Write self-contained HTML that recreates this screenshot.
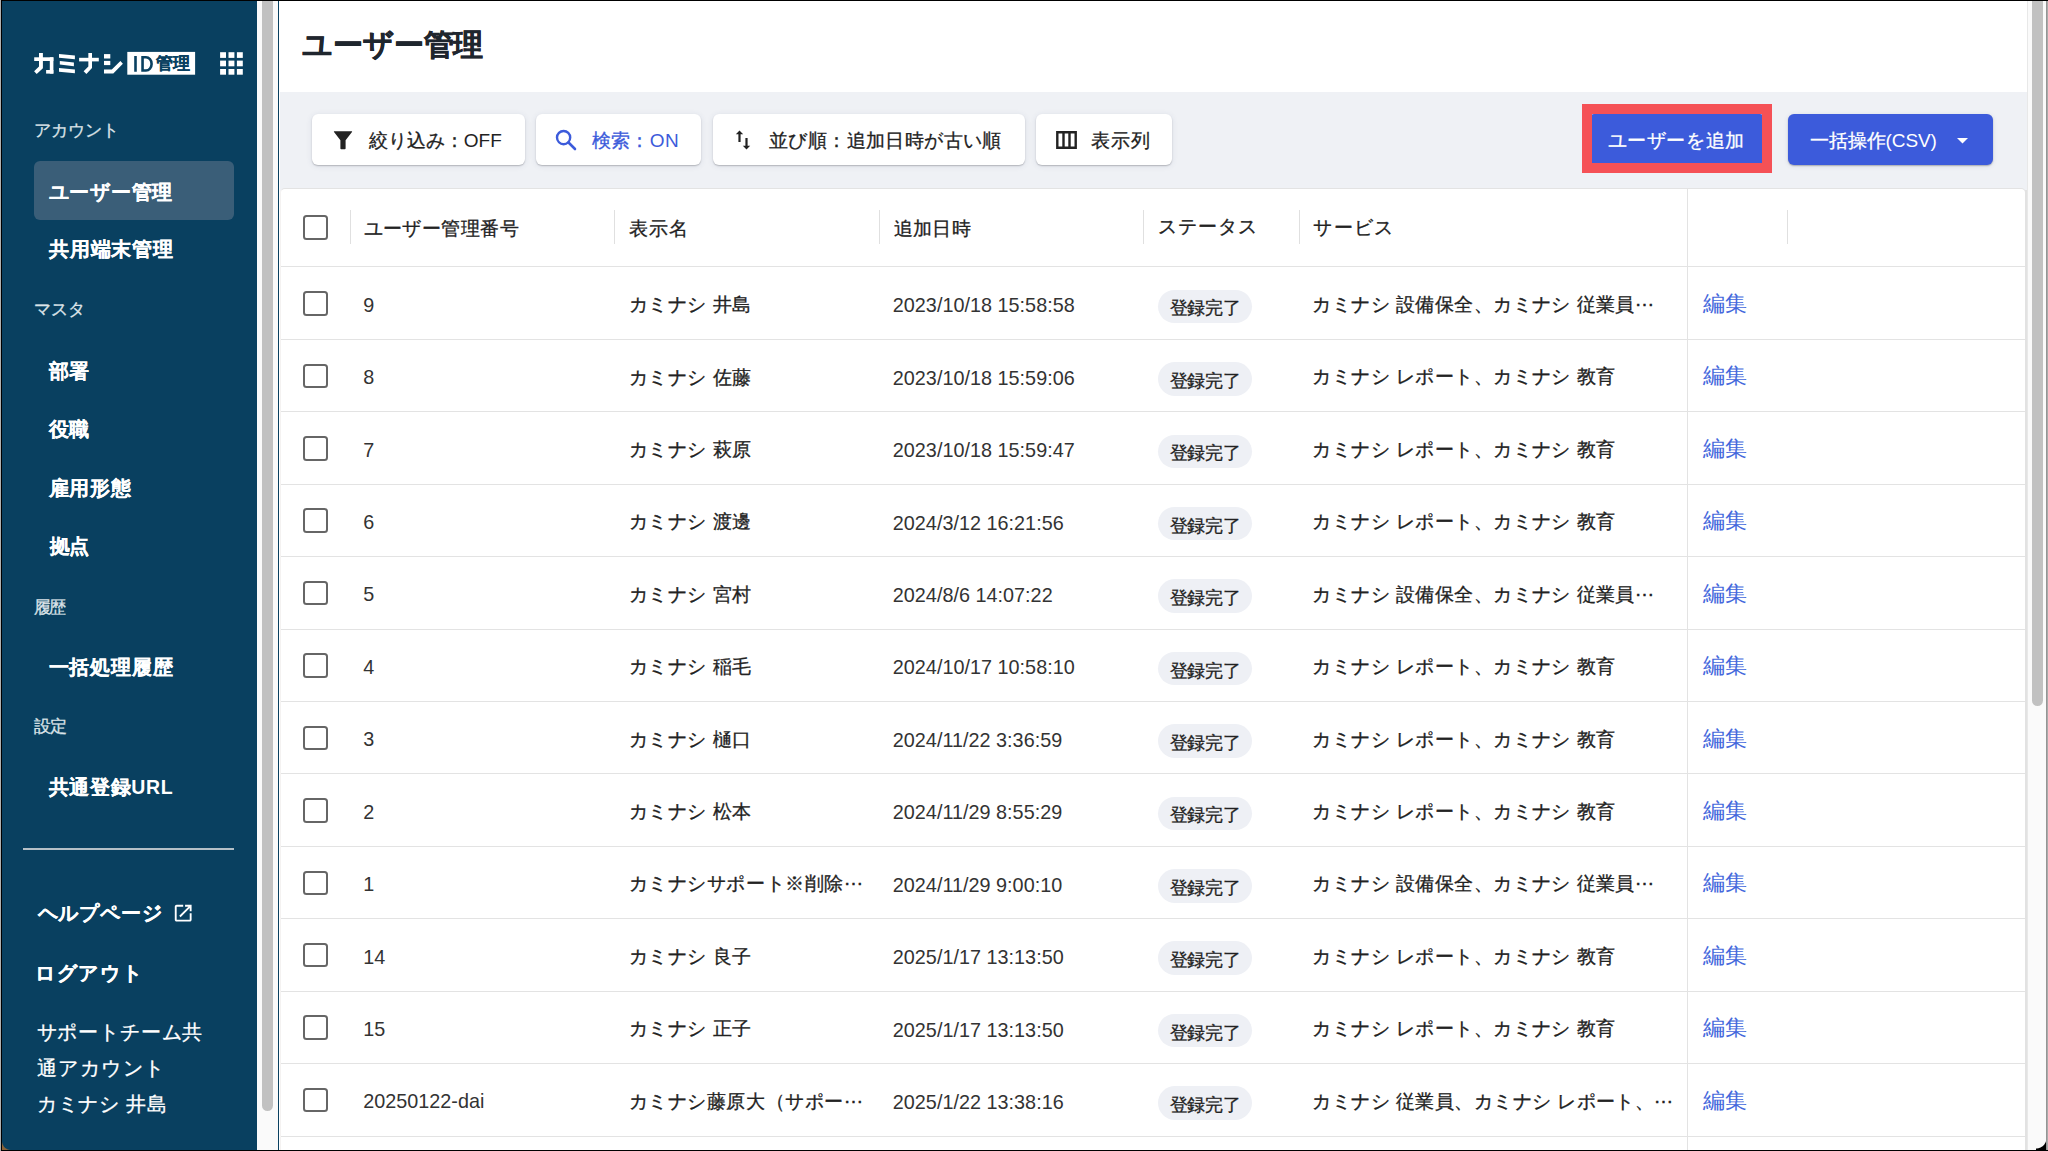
<!DOCTYPE html>
<html><head><meta charset="utf-8"><title>ユーザー管理</title><style>
*{box-sizing:border-box}
html,body{margin:0;padding:0;width:2048px;height:1151px;overflow:hidden;background:#fff}
body{position:relative;font-family:"Liberation Sans",sans-serif}
.a{position:absolute}
.t{position:absolute;white-space:nowrap;line-height:1;font-family:"Liberation Sans",sans-serif}
</style></head><body>
<div class="a" style="left:0px;top:0px;width:258px;height:1151px;background:#094060"></div>
<div class="a" style="left:257px;top:0px;width:21px;height:1151px;background:#fafafa"></div>
<div class="a" style="left:262px;top:0px;width:11px;height:1111px;background:#c1c1c1;border-radius:0 0 6px 6px"></div>
<div class="a" style="left:277.5px;top:0px;width:1.5px;height:1151px;background:#094060"></div>
<div class="a" style="left:279px;top:0px;width:1748px;height:1151px;background:#fff"></div>
<div class="a" style="left:280px;top:92px;width:1747px;height:1059px;background:#eff1f5"></div>
<div class="a" style="left:2027px;top:0px;width:19px;height:1151px;background:#fafafa;border-left:1px solid #e8e8e8"></div>
<div class="a" style="left:2032px;top:0px;width:11px;height:706px;background:#c1c1c1;border-radius:0 0 6px 6px"></div>
<div class="a" style="left:2046px;top:0px;width:2px;height:1151px;background:linear-gradient(90deg,#8a8a8a,#b5b5b5)"></div>
<svg class="a" style="left:0;top:0" width="258" height="90" viewBox="0 0 258 90"><g fill="#fff"><rect x="34.2" y="57.3" width="19.2" height="3.7"/><polygon points="39,53.1 42.9,53.1 42.9,68.2 36.7,74.0 34.1,71.3 39,66.6"/><rect x="49.8" y="57.3" width="3.6" height="16.3"/><rect x="46.1" y="70" width="7.3" height="3.6"/><polygon points="59,54.1 74.9,55.6 74.9,59.2 59,57.7"/><polygon points="59.8,60.9 73.9,62.5 73.9,66.2 59.8,64.6"/><polygon points="59,68.0 74.9,69.6 74.9,73.3 59,71.7"/><rect x="79.1" y="57.8" width="19.7" height="3.6"/><polygon points="88.35,53.1 92.0,53.1 92.0,68.0 86.4,73.9 83.6,71.2 88.35,66.5"/><rect x="104" y="54.1" width="6.3" height="4.4"/><rect x="104" y="60.9" width="6.3" height="4.2"/><polygon points="104,69.6 111.8,69.6 120.4,61.1 122.9,63.7 113.3,73.6 104,73.6"/><rect x="127.3" y="51.9" width="67.8" height="22.8"/></g><g fill="#094060"><rect x="134.2" y="56" width="2.6" height="15.75"/><path fill-rule="evenodd" d="M141.25 56H146A6.9 7.875 0 0 1 146 71.75H141.25ZM143.85 58.5V69.25H146A4.3 5.375 0 0 0 146 58.5Z"/></g><g fill="#fff"><rect x="220.1" y="52.2" width="5.9" height="5.7"/><rect x="228.5" y="52.2" width="5.9" height="5.7"/><rect x="236.9" y="52.2" width="5.9" height="5.7"/><rect x="220.1" y="60.6" width="5.9" height="5.7"/><rect x="228.5" y="60.6" width="5.9" height="5.7"/><rect x="236.9" y="60.6" width="5.9" height="5.7"/><rect x="220.1" y="69.0" width="5.9" height="5.7"/><rect x="228.5" y="69.0" width="5.9" height="5.7"/><rect x="236.9" y="69.0" width="5.9" height="5.7"/></g></svg>
<div class="t" style="left:155.9px;top:55.05px;font-size:16.5px;color:#094060;font-weight:bold;-webkit-text-stroke:0.2px currentColor;">管理</div>
<div class="t" style="left:34.1px;top:122.45px;font-size:16.5px;letter-spacing:-0.1px;color:#dde4e9;-webkit-text-stroke:0.3px currentColor;">アカウント</div>
<div class="t" style="left:34.1px;top:300.7px;font-size:16.5px;letter-spacing:0.2px;color:#dde4e9;-webkit-text-stroke:0.3px currentColor;">マスタ</div>
<div class="t" style="left:34.1px;top:598.75px;font-size:16.5px;letter-spacing:-1.8px;color:#dde4e9;-webkit-text-stroke:0.3px currentColor;">履歴</div>
<div class="t" style="left:34px;top:718.25px;font-size:16.5px;letter-spacing:-1.0px;color:#dde4e9;-webkit-text-stroke:0.3px currentColor;">設定</div>
<div class="a" style="left:34px;top:161px;width:200px;height:58.5px;background:#3a5e78;border-radius:6px"></div>
<div class="t" style="left:48.7px;top:182.75px;font-size:19.5px;letter-spacing:0.72px;color:#fff;font-weight:bold;-webkit-text-stroke:0.15px currentColor;">ユーザー管理</div>
<div class="t" style="left:48.7px;top:240.45px;font-size:19.5px;letter-spacing:0.92px;color:#fff;font-weight:bold;-webkit-text-stroke:0.15px currentColor;">共用端末管理</div>
<div class="t" style="left:48.7px;top:362.15px;font-size:19.5px;letter-spacing:0.2px;color:#fff;font-weight:bold;-webkit-text-stroke:0.15px currentColor;">部署</div>
<div class="t" style="left:49px;top:420.0px;font-size:19.5px;color:#fff;font-weight:bold;-webkit-text-stroke:0.15px currentColor;">役職</div>
<div class="t" style="left:48.7px;top:479.15px;font-size:19.5px;letter-spacing:0.667px;color:#fff;font-weight:bold;-webkit-text-stroke:0.15px currentColor;">雇用形態</div>
<div class="t" style="left:49.7px;top:537.15px;font-size:19.5px;letter-spacing:-0.8px;color:#fff;font-weight:bold;-webkit-text-stroke:0.15px currentColor;">拠点</div>
<div class="t" style="left:48.7px;top:657.9px;font-size:19.5px;letter-spacing:0.8px;color:#fff;font-weight:bold;-webkit-text-stroke:0.15px currentColor;">一括処理履歴</div>
<div class="t" style="left:48.7px;top:777.8px;font-size:19.5px;letter-spacing:0.667px;color:#fff;font-weight:bold;-webkit-text-stroke:0.15px currentColor;">共通登録<span style="-webkit-text-stroke:0">URL</span></div>
<div class="t" style="left:37.6px;top:904.4px;font-size:19.5px;letter-spacing:0.88px;color:#fff;font-weight:bold;-webkit-text-stroke:0.15px currentColor;">ヘルプページ</div>
<div class="t" style="left:34.6px;top:963.75px;font-size:19.5px;letter-spacing:1.95px;color:#fff;font-weight:bold;-webkit-text-stroke:0.15px currentColor;">ログアウト</div>
<div class="a" style="left:23px;top:848px;width:211px;height:2px;background:#b5c0c7"></div>
<svg class="a" style="left:172.2px;top:901.6px" width="22" height="22" viewBox="0 0 23.58 23.58"><path fill="#fff" d="M19 19H5V5h7V3H5c-1.11 0-2 .9-2 2v14c0 1.1.89 2 2 2h14c1.1 0 2-.9 2-2v-7h-2v7zM14 3v2h3.59l-9.83 9.83 1.41 1.41L19 6.41V10h2V3h-7z"/></svg>
<div class="t" style="left:36.6px;top:1022.85px;font-size:19.5px;letter-spacing:0.829px;color:#fff;-webkit-text-stroke:0.3px currentColor;">サポートチーム共</div>
<div class="t" style="left:36.9px;top:1059.0px;font-size:19.5px;letter-spacing:1.48px;color:#fff;-webkit-text-stroke:0.3px currentColor;">通アカウント</div>
<div class="t" style="left:36.7px;top:1095.4px;font-size:19.5px;letter-spacing:0.867px;color:#fff;-webkit-text-stroke:0.3px currentColor;">カミナシ 井島</div>
<div class="t" style="left:302.3px;top:29.55px;font-size:29.5px;letter-spacing:-0.16px;color:#1f262e;font-weight:bold;-webkit-text-stroke:0.5px currentColor;">ユーザー管理</div>
<div class="a" style="left:312px;top:114.1px;width:213px;height:51.2px;background:#fff;border-radius:6px;box-shadow:0 1px 1.5px rgba(0,0,0,0.22),0 1px 6px rgba(50,70,120,0.10)"></div>
<div class="a" style="left:536px;top:114.1px;width:165px;height:51.2px;background:#fff;border-radius:6px;box-shadow:0 1px 1.5px rgba(0,0,0,0.22),0 1px 6px rgba(50,70,120,0.10)"></div>
<div class="a" style="left:713px;top:114.1px;width:312px;height:51.2px;background:#fff;border-radius:6px;box-shadow:0 1px 1.5px rgba(0,0,0,0.22),0 1px 6px rgba(50,70,120,0.10)"></div>
<div class="a" style="left:1036px;top:114.1px;width:136px;height:51.2px;background:#fff;border-radius:6px;box-shadow:0 1px 1.5px rgba(0,0,0,0.22),0 1px 6px rgba(50,70,120,0.10)"></div>
<svg class="a" style="left:333px;top:130px" width="20" height="20" viewBox="0 0 20 20"><path d="M1.2 1.2Q0.6 1.4 1 2.1L7.4 10.2V18.5Q7.4 19.3 8.2 19.3H11.8Q12.6 19.3 12.6 18.5V10.2L19 2.1Q19.4 1.4 18.8 1.2Z" fill="#222"/></svg>
<div class="t" style="left:368.8px;top:130.9px;font-size:19px;color:#222222;-webkit-text-stroke:0.3px currentColor;">絞り込み：<span style="-webkit-text-stroke:0">OFF</span></div>
<svg class="a" style="left:555px;top:129px" width="22" height="22" viewBox="0 0 22 22"><circle cx="8.6" cy="8.6" r="6.6" fill="none" stroke="#3c5bdb" stroke-width="2.4"/><path d="M13.5 13.5 20 20" stroke="#3c5bdb" stroke-width="2.6" stroke-linecap="round"/></svg>
<div class="t" style="left:591.8px;top:131.0px;font-size:19px;letter-spacing:0.35px;color:#3c5bdb;-webkit-text-stroke:0.3px currentColor;">検索：<span style="-webkit-text-stroke:0">ON</span></div>
<svg class="a" style="left:735px;top:129px" width="17" height="22" viewBox="0 0 17 22"><path d="M4.5 1.5 0.8 5.3H3.4V13H5.6V5.3H8.2Z" fill="#222"/><path d="M11.5 20.5 15.2 16.7H12.6V9H10.4V16.7H7.8Z" fill="#222"/></svg>
<div class="t" style="left:769px;top:131.15px;font-size:19px;letter-spacing:0.4px;color:#222222;-webkit-text-stroke:0.3px currentColor;">並び順：追加日時が古い順</div>
<svg class="a" style="left:1056px;top:131px" width="22" height="18" viewBox="0 0 22 18"><path d="M1.3 1.3H19.7V16.7H1.3Z M7.5 1.3V16.7 M13.5 1.3V16.7" fill="none" stroke="#222" stroke-width="2.4"/></svg>
<div class="t" style="left:1091px;top:130.75px;font-size:19px;letter-spacing:0.8px;color:#222222;-webkit-text-stroke:0.3px currentColor;">表示列</div>
<div class="a" style="left:1591px;top:114px;width:172px;height:50px;background:#3c5bdb;border-radius:3px"></div>
<div class="t" style="left:1607.9px;top:130.8px;font-size:19px;letter-spacing:0.533px;color:#fff;-webkit-text-stroke:0.3px currentColor;">ユーザーを追加</div>
<div class="a" style="left:1581.5px;top:103.8px;width:190.5px;height:69.2px;border:10px solid #f55156"></div>
<div class="a" style="left:1788px;top:114px;width:205px;height:51.3px;background:#3c5bdb;border-radius:6px;box-shadow:0 1px 1.5px rgba(0,0,0,0.25),0 1px 5px rgba(50,70,120,0.12)"></div>
<div class="t" style="left:1810px;top:130.9px;font-size:19px;letter-spacing:-0.1px;color:#fff;-webkit-text-stroke:0.3px currentColor;">一括操作<span style="-webkit-text-stroke:0">(CSV)</span></div>
<svg class="a" style="left:1957px;top:138px" width="11" height="6" viewBox="0 0 11 6"><path d="M0 0H11L5.5 5.6Z" fill="#fff"/></svg>
<div class="a" style="left:280px;top:188px;width:1746px;height:980px;background:#fff;border:1px solid #e3e3e3;border-left-color:#f4f2f1;border-radius:5px"></div>
<div class="a" style="left:303px;top:215px;width:24.5px;height:24.5px;border:2.7px solid #666666;border-radius:3.5px"></div>
<div class="a" style="left:349.5px;top:210px;width:1.3px;height:34px;background:#e0e0e0"></div>
<div class="a" style="left:614px;top:210px;width:1.3px;height:34px;background:#e0e0e0"></div>
<div class="a" style="left:879px;top:210px;width:1.3px;height:34px;background:#e0e0e0"></div>
<div class="a" style="left:1143px;top:210px;width:1.3px;height:34px;background:#e0e0e0"></div>
<div class="a" style="left:1299px;top:210px;width:1.3px;height:34px;background:#e0e0e0"></div>
<div class="a" style="left:1787px;top:210px;width:1.3px;height:34px;background:#e0e0e0"></div>
<div class="t" style="left:363.5px;top:219.1px;font-size:19px;letter-spacing:0.429px;color:#222222;-webkit-text-stroke:0.3px currentColor;">ユーザー管理番号</div>
<div class="t" style="left:628.6px;top:219.1px;font-size:19px;letter-spacing:1.3px;color:#222222;-webkit-text-stroke:0.3px currentColor;">表示名</div>
<div class="t" style="left:893.8px;top:219.1px;font-size:19px;letter-spacing:0.267px;color:#222222;-webkit-text-stroke:0.3px currentColor;">追加日時</div>
<div class="t" style="left:1158px;top:217.15px;font-size:19px;letter-spacing:0.9px;color:#222222;-webkit-text-stroke:0.3px currentColor;">ステータス</div>
<div class="t" style="left:1313.4px;top:217.65px;font-size:19px;letter-spacing:1.2px;color:#222222;-webkit-text-stroke:0.3px currentColor;">サービス</div>
<div class="a" style="left:1687px;top:188px;width:1.3px;height:963px;background:#e3e3e3"></div>
<div class="a" style="left:2025px;top:190px;width:2px;height:961px;background:#e2e2e2"></div>
<div class="a" style="left:281px;top:266px;width:1744px;height:1px;background:#e3e3e3"></div>
<div class="a" style="left:281px;top:339.0px;width:1744px;height:1px;background:#e3e3e3"></div>
<div class="a" style="left:303px;top:291.21px;width:24.5px;height:24.5px;border:2.7px solid #666666;border-radius:3.5px"></div>
<div class="t" style="left:363.3px;top:295.75px;font-size:19.8px;color:#333;">9</div>
<div class="t" style="left:628.6px;top:295.1px;font-size:19px;letter-spacing:0.566px;color:#222222;-webkit-text-stroke:0.3px currentColor;">カミナシ 井島</div>
<div class="t" style="left:892.8px;top:296.3px;font-size:19.8px;letter-spacing:0.022px;color:#333;">2023/10/18 15:58:58</div>
<div class="a" style="left:1158px;top:289.71px;width:94px;height:33.5px;background:#eef0f5;border-radius:17px"></div>
<div class="t" style="left:1169.6px;top:300.4px;font-size:17.5px;letter-spacing:-0.133px;color:#222222;-webkit-text-stroke:0.3px currentColor;">登録完了</div>
<div class="t" style="left:1312.4px;top:295.0px;font-size:19px;letter-spacing:0.444px;color:#222222;-webkit-text-stroke:0.3px currentColor;">カミナシ 設備保全、カミナシ 従業員⋯</div>
<div class="t" style="left:1703.1px;top:294.0px;font-size:21.5px;letter-spacing:-0.2px;color:#4468dc;">編集</div>
<div class="a" style="left:281px;top:411.0px;width:1744px;height:1px;background:#e3e3e3"></div>
<div class="a" style="left:303px;top:363.63px;width:24.5px;height:24.5px;border:2.7px solid #666666;border-radius:3.5px"></div>
<div class="t" style="left:363.3px;top:368.17px;font-size:19.8px;color:#333;">8</div>
<div class="t" style="left:628.6px;top:367.52px;font-size:19px;letter-spacing:0.566px;color:#222222;-webkit-text-stroke:0.3px currentColor;">カミナシ 佐藤</div>
<div class="t" style="left:892.8px;top:368.72px;font-size:19.8px;letter-spacing:0.022px;color:#333;">2023/10/18 15:59:06</div>
<div class="a" style="left:1158px;top:362.13px;width:94px;height:33.5px;background:#eef0f5;border-radius:17px"></div>
<div class="t" style="left:1169.6px;top:372.82px;font-size:17.5px;letter-spacing:-0.133px;color:#222222;-webkit-text-stroke:0.3px currentColor;">登録完了</div>
<div class="t" style="left:1312.4px;top:367.42px;font-size:19px;letter-spacing:0.444px;color:#222222;-webkit-text-stroke:0.3px currentColor;">カミナシ レポート、カミナシ 教育</div>
<div class="t" style="left:1703.1px;top:366.42px;font-size:21.5px;letter-spacing:-0.2px;color:#4468dc;">編集</div>
<div class="a" style="left:281px;top:484.0px;width:1744px;height:1px;background:#e3e3e3"></div>
<div class="a" style="left:303px;top:436.05px;width:24.5px;height:24.5px;border:2.7px solid #666666;border-radius:3.5px"></div>
<div class="t" style="left:363.3px;top:440.59px;font-size:19.8px;color:#333;">7</div>
<div class="t" style="left:628.6px;top:439.94px;font-size:19px;letter-spacing:0.566px;color:#222222;-webkit-text-stroke:0.3px currentColor;">カミナシ 萩原</div>
<div class="t" style="left:892.8px;top:441.14px;font-size:19.8px;letter-spacing:0.022px;color:#333;">2023/10/18 15:59:47</div>
<div class="a" style="left:1158px;top:434.55px;width:94px;height:33.5px;background:#eef0f5;border-radius:17px"></div>
<div class="t" style="left:1169.6px;top:445.24px;font-size:17.5px;letter-spacing:-0.133px;color:#222222;-webkit-text-stroke:0.3px currentColor;">登録完了</div>
<div class="t" style="left:1312.4px;top:439.84px;font-size:19px;letter-spacing:0.444px;color:#222222;-webkit-text-stroke:0.3px currentColor;">カミナシ レポート、カミナシ 教育</div>
<div class="t" style="left:1703.1px;top:438.84px;font-size:21.5px;letter-spacing:-0.2px;color:#4468dc;">編集</div>
<div class="a" style="left:281px;top:556.0px;width:1744px;height:1px;background:#e3e3e3"></div>
<div class="a" style="left:303px;top:508.47px;width:24.5px;height:24.5px;border:2.7px solid #666666;border-radius:3.5px"></div>
<div class="t" style="left:363.3px;top:513.01px;font-size:19.8px;color:#333;">6</div>
<div class="t" style="left:628.6px;top:512.36px;font-size:19px;letter-spacing:0.566px;color:#222222;-webkit-text-stroke:0.3px currentColor;">カミナシ 渡邊</div>
<div class="t" style="left:892.8px;top:513.56px;font-size:19.8px;letter-spacing:0.022px;color:#333;">2024/3/12 16:21:56</div>
<div class="a" style="left:1158px;top:506.97px;width:94px;height:33.5px;background:#eef0f5;border-radius:17px"></div>
<div class="t" style="left:1169.6px;top:517.66px;font-size:17.5px;letter-spacing:-0.133px;color:#222222;-webkit-text-stroke:0.3px currentColor;">登録完了</div>
<div class="t" style="left:1312.4px;top:512.26px;font-size:19px;letter-spacing:0.444px;color:#222222;-webkit-text-stroke:0.3px currentColor;">カミナシ レポート、カミナシ 教育</div>
<div class="t" style="left:1703.1px;top:511.26px;font-size:21.5px;letter-spacing:-0.2px;color:#4468dc;">編集</div>
<div class="a" style="left:281px;top:629.0px;width:1744px;height:1px;background:#e3e3e3"></div>
<div class="a" style="left:303px;top:580.8900000000001px;width:24.5px;height:24.5px;border:2.7px solid #666666;border-radius:3.5px"></div>
<div class="t" style="left:363.3px;top:585.43px;font-size:19.8px;color:#333;">5</div>
<div class="t" style="left:628.6px;top:584.78px;font-size:19px;letter-spacing:0.566px;color:#222222;-webkit-text-stroke:0.3px currentColor;">カミナシ 宮村</div>
<div class="t" style="left:892.8px;top:585.98px;font-size:19.8px;letter-spacing:0.022px;color:#333;">2024/8/6 14:07:22</div>
<div class="a" style="left:1158px;top:579.3900000000001px;width:94px;height:33.5px;background:#eef0f5;border-radius:17px"></div>
<div class="t" style="left:1169.6px;top:590.08px;font-size:17.5px;letter-spacing:-0.133px;color:#222222;-webkit-text-stroke:0.3px currentColor;">登録完了</div>
<div class="t" style="left:1312.4px;top:584.68px;font-size:19px;letter-spacing:0.444px;color:#222222;-webkit-text-stroke:0.3px currentColor;">カミナシ 設備保全、カミナシ 従業員⋯</div>
<div class="t" style="left:1703.1px;top:583.68px;font-size:21.5px;letter-spacing:-0.2px;color:#4468dc;">編集</div>
<div class="a" style="left:281px;top:701.0px;width:1744px;height:1px;background:#e3e3e3"></div>
<div class="a" style="left:303px;top:653.3100000000001px;width:24.5px;height:24.5px;border:2.7px solid #666666;border-radius:3.5px"></div>
<div class="t" style="left:363.3px;top:657.85px;font-size:19.8px;color:#333;">4</div>
<div class="t" style="left:628.6px;top:657.2px;font-size:19px;letter-spacing:0.566px;color:#222222;-webkit-text-stroke:0.3px currentColor;">カミナシ 稲毛</div>
<div class="t" style="left:892.8px;top:658.4px;font-size:19.8px;letter-spacing:0.022px;color:#333;">2024/10/17 10:58:10</div>
<div class="a" style="left:1158px;top:651.8100000000001px;width:94px;height:33.5px;background:#eef0f5;border-radius:17px"></div>
<div class="t" style="left:1169.6px;top:662.5px;font-size:17.5px;letter-spacing:-0.133px;color:#222222;-webkit-text-stroke:0.3px currentColor;">登録完了</div>
<div class="t" style="left:1312.4px;top:657.1px;font-size:19px;letter-spacing:0.444px;color:#222222;-webkit-text-stroke:0.3px currentColor;">カミナシ レポート、カミナシ 教育</div>
<div class="t" style="left:1703.1px;top:656.1px;font-size:21.5px;letter-spacing:-0.2px;color:#4468dc;">編集</div>
<div class="a" style="left:281px;top:773.0px;width:1744px;height:1px;background:#e3e3e3"></div>
<div class="a" style="left:303px;top:725.73px;width:24.5px;height:24.5px;border:2.7px solid #666666;border-radius:3.5px"></div>
<div class="t" style="left:363.3px;top:730.27px;font-size:19.8px;color:#333;">3</div>
<div class="t" style="left:628.6px;top:729.62px;font-size:19px;letter-spacing:0.566px;color:#222222;-webkit-text-stroke:0.3px currentColor;">カミナシ 樋口</div>
<div class="t" style="left:892.8px;top:730.82px;font-size:19.8px;letter-spacing:0.022px;color:#333;">2024/11/22 3:36:59</div>
<div class="a" style="left:1158px;top:724.23px;width:94px;height:33.5px;background:#eef0f5;border-radius:17px"></div>
<div class="t" style="left:1169.6px;top:734.92px;font-size:17.5px;letter-spacing:-0.133px;color:#222222;-webkit-text-stroke:0.3px currentColor;">登録完了</div>
<div class="t" style="left:1312.4px;top:729.52px;font-size:19px;letter-spacing:0.444px;color:#222222;-webkit-text-stroke:0.3px currentColor;">カミナシ レポート、カミナシ 教育</div>
<div class="t" style="left:1703.1px;top:728.52px;font-size:21.5px;letter-spacing:-0.2px;color:#4468dc;">編集</div>
<div class="a" style="left:281px;top:846.0px;width:1744px;height:1px;background:#e3e3e3"></div>
<div class="a" style="left:303px;top:798.1500000000001px;width:24.5px;height:24.5px;border:2.7px solid #666666;border-radius:3.5px"></div>
<div class="t" style="left:363.3px;top:802.69px;font-size:19.8px;color:#333;">2</div>
<div class="t" style="left:628.6px;top:802.04px;font-size:19px;letter-spacing:0.566px;color:#222222;-webkit-text-stroke:0.3px currentColor;">カミナシ 松本</div>
<div class="t" style="left:892.8px;top:803.24px;font-size:19.8px;letter-spacing:0.022px;color:#333;">2024/11/29 8:55:29</div>
<div class="a" style="left:1158px;top:796.6500000000001px;width:94px;height:33.5px;background:#eef0f5;border-radius:17px"></div>
<div class="t" style="left:1169.6px;top:807.34px;font-size:17.5px;letter-spacing:-0.133px;color:#222222;-webkit-text-stroke:0.3px currentColor;">登録完了</div>
<div class="t" style="left:1312.4px;top:801.94px;font-size:19px;letter-spacing:0.444px;color:#222222;-webkit-text-stroke:0.3px currentColor;">カミナシ レポート、カミナシ 教育</div>
<div class="t" style="left:1703.1px;top:800.94px;font-size:21.5px;letter-spacing:-0.2px;color:#4468dc;">編集</div>
<div class="a" style="left:281px;top:918.0px;width:1744px;height:1px;background:#e3e3e3"></div>
<div class="a" style="left:303px;top:870.57px;width:24.5px;height:24.5px;border:2.7px solid #666666;border-radius:3.5px"></div>
<div class="t" style="left:363.3px;top:875.11px;font-size:19.8px;color:#333;">1</div>
<div class="t" style="left:628.6px;top:874.46px;font-size:19px;letter-spacing:0.566px;color:#222222;-webkit-text-stroke:0.3px currentColor;">カミナシサポート※削除⋯</div>
<div class="t" style="left:892.8px;top:875.66px;font-size:19.8px;letter-spacing:0.022px;color:#333;">2024/11/29 9:00:10</div>
<div class="a" style="left:1158px;top:869.07px;width:94px;height:33.5px;background:#eef0f5;border-radius:17px"></div>
<div class="t" style="left:1169.6px;top:879.76px;font-size:17.5px;letter-spacing:-0.133px;color:#222222;-webkit-text-stroke:0.3px currentColor;">登録完了</div>
<div class="t" style="left:1312.4px;top:874.36px;font-size:19px;letter-spacing:0.444px;color:#222222;-webkit-text-stroke:0.3px currentColor;">カミナシ 設備保全、カミナシ 従業員⋯</div>
<div class="t" style="left:1703.1px;top:873.36px;font-size:21.5px;letter-spacing:-0.2px;color:#4468dc;">編集</div>
<div class="a" style="left:281px;top:991.0px;width:1744px;height:1px;background:#e3e3e3"></div>
<div class="a" style="left:303px;top:942.99px;width:24.5px;height:24.5px;border:2.7px solid #666666;border-radius:3.5px"></div>
<div class="t" style="left:363.3px;top:947.53px;font-size:19.8px;color:#333;">14</div>
<div class="t" style="left:628.6px;top:946.88px;font-size:19px;letter-spacing:0.566px;color:#222222;-webkit-text-stroke:0.3px currentColor;">カミナシ 良子</div>
<div class="t" style="left:892.8px;top:948.08px;font-size:19.8px;letter-spacing:0.022px;color:#333;">2025/1/17 13:13:50</div>
<div class="a" style="left:1158px;top:941.49px;width:94px;height:33.5px;background:#eef0f5;border-radius:17px"></div>
<div class="t" style="left:1169.6px;top:952.18px;font-size:17.5px;letter-spacing:-0.133px;color:#222222;-webkit-text-stroke:0.3px currentColor;">登録完了</div>
<div class="t" style="left:1312.4px;top:946.78px;font-size:19px;letter-spacing:0.444px;color:#222222;-webkit-text-stroke:0.3px currentColor;">カミナシ レポート、カミナシ 教育</div>
<div class="t" style="left:1703.1px;top:945.78px;font-size:21.5px;letter-spacing:-0.2px;color:#4468dc;">編集</div>
<div class="a" style="left:281px;top:1063.0px;width:1744px;height:1px;background:#e3e3e3"></div>
<div class="a" style="left:303px;top:1015.4100000000001px;width:24.5px;height:24.5px;border:2.7px solid #666666;border-radius:3.5px"></div>
<div class="t" style="left:363.3px;top:1019.95px;font-size:19.8px;color:#333;">15</div>
<div class="t" style="left:628.6px;top:1019.3px;font-size:19px;letter-spacing:0.566px;color:#222222;-webkit-text-stroke:0.3px currentColor;">カミナシ 正子</div>
<div class="t" style="left:892.8px;top:1020.5px;font-size:19.8px;letter-spacing:0.022px;color:#333;">2025/1/17 13:13:50</div>
<div class="a" style="left:1158px;top:1013.9100000000001px;width:94px;height:33.5px;background:#eef0f5;border-radius:17px"></div>
<div class="t" style="left:1169.6px;top:1024.6px;font-size:17.5px;letter-spacing:-0.133px;color:#222222;-webkit-text-stroke:0.3px currentColor;">登録完了</div>
<div class="t" style="left:1312.4px;top:1019.2px;font-size:19px;letter-spacing:0.444px;color:#222222;-webkit-text-stroke:0.3px currentColor;">カミナシ レポート、カミナシ 教育</div>
<div class="t" style="left:1703.1px;top:1018.2px;font-size:21.5px;letter-spacing:-0.2px;color:#4468dc;">編集</div>
<div class="a" style="left:281px;top:1136.0px;width:1744px;height:1px;background:#e3e3e3"></div>
<div class="a" style="left:303px;top:1087.83px;width:24.5px;height:24.5px;border:2.7px solid #666666;border-radius:3.5px"></div>
<div class="t" style="left:363.3px;top:1092.37px;font-size:19.8px;color:#333;">20250122-dai</div>
<div class="t" style="left:628.6px;top:1091.72px;font-size:19px;letter-spacing:0.566px;color:#222222;-webkit-text-stroke:0.3px currentColor;">カミナシ藤原大（サポー⋯</div>
<div class="t" style="left:892.8px;top:1092.92px;font-size:19.8px;letter-spacing:0.022px;color:#333;">2025/1/22 13:38:16</div>
<div class="a" style="left:1158px;top:1086.33px;width:94px;height:33.5px;background:#eef0f5;border-radius:17px"></div>
<div class="t" style="left:1169.6px;top:1097.02px;font-size:17.5px;letter-spacing:-0.133px;color:#222222;-webkit-text-stroke:0.3px currentColor;">登録完了</div>
<div class="t" style="left:1312.4px;top:1091.62px;font-size:19px;letter-spacing:0.444px;color:#222222;-webkit-text-stroke:0.3px currentColor;">カミナシ 従業員、カミナシ レポート、⋯</div>
<div class="t" style="left:1703.1px;top:1090.62px;font-size:21.5px;letter-spacing:-0.2px;color:#4468dc;">編集</div>
<div class="a" style="left:0px;top:0px;width:2048px;height:1px;background:#000"></div>
<div class="a" style="left:0px;top:1150px;width:2048px;height:1px;background:#000"></div>
<div class="a" style="left:0px;top:0px;width:1px;height:1151px;background:#b0b0b0"></div>
<div class="a" style="left:1px;top:0px;width:1px;height:1151px;background:#000"></div>
<div class="a" style="left:2036px;top:1138px;width:10px;height:12px;background:radial-gradient(circle at 0 0,rgba(0,0,0,0) 10px,#000 11px)"></div>
<div class="a" style="left:2px;top:1141px;width:9px;height:9px;background:radial-gradient(circle at 9px 0,rgba(0,0,0,0) 8.5px,#8a6338 9.5px)"></div>
</body></html>
